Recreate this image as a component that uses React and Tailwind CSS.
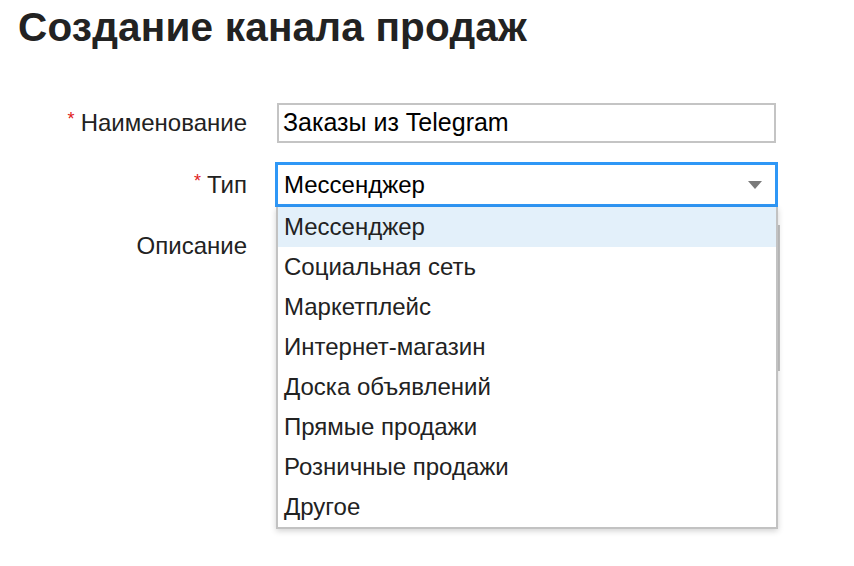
import React from 'react';

const options = [
  'Мессенджер',
  'Социальная сеть',
  'Маркетплейс',
  'Интернет-магазин',
  'Доска объявлений',
  'Прямые продажи',
  'Розничные продажи',
  'Другое',
];

const Label = ({ required, children }) => (
  <div className="w-[247px] shrink-0 text-right text-[24px] text-[#222]">
    {required && <span className="text-[#e02020] text-[18px] relative top-[-6px] mr-[6px]">*</span>}
    {children}
  </div>
);

export default function App() {
  return (
    <div className="w-[854px] h-[566px] bg-white overflow-hidden font-['Liberation_Sans',Arial,sans-serif]">
      <h1 className="pl-[18px] pt-[3px] text-[40.5px] leading-[48px] font-bold text-[#222] tracking-[0.2px]">
        Создание канала продаж
      </h1>

      <div className="flex flex-col mt-[52px]">
        {/* Наименование */}
        <div className="flex items-center gap-[30px] h-[40px]">
          <Label required>Наименование</Label>
          <div className="w-[499px] h-[40px] border-2 border-[#c4c4c4] px-[4px] flex items-center text-[25px] text-black">
            Заказы из Telegram
          </div>
        </div>

        {/* Тип */}
        <div className="flex items-center gap-[28px] h-[45px] mt-[19px]">
          <Label required>Тип</Label>
          <div className="relative">
            <div className="w-[503px] h-[45px] border-[3px] border-[#2f97f6] pl-[6px] pr-[12px] flex items-center justify-between text-[24px] text-black">
              <span>Мессенджер</span>
              <svg width="14" height="8" viewBox="0 0 14 8" className="mr-[1px]">
                <path d="M0 0 H14 L7 8 Z" fill="#7a7a7a" />
              </svg>
            </div>

            {/* Выпадающий список */}
            <div className="absolute left-[1px] top-[45px] w-[502px] z-10 bg-white border-2 border-t-0 border-[#c2c2c2] shadow-[0_2px_6px_rgba(0,0,0,0.18)]">
              {options.map((o, i) => (
                <div
                  key={o}
                  className={`h-[40px] pl-[6px] flex items-center text-[24px] text-[#222] ${i === 0 ? 'bg-[#e3f0fa]' : ''}`}
                >
                  {o}
                </div>
              ))}
            </div>
          </div>
        </div>

        {/* Описание */}
        <div className="flex items-start gap-[30px] mt-[18px]">
          <div className="pt-[3px]">
            <Label>Описание</Label>
          </div>
          <div className="w-[503px] h-[146px] border-2 border-[#c4c4c4]" />
        </div>
      </div>
    </div>
  );
}
